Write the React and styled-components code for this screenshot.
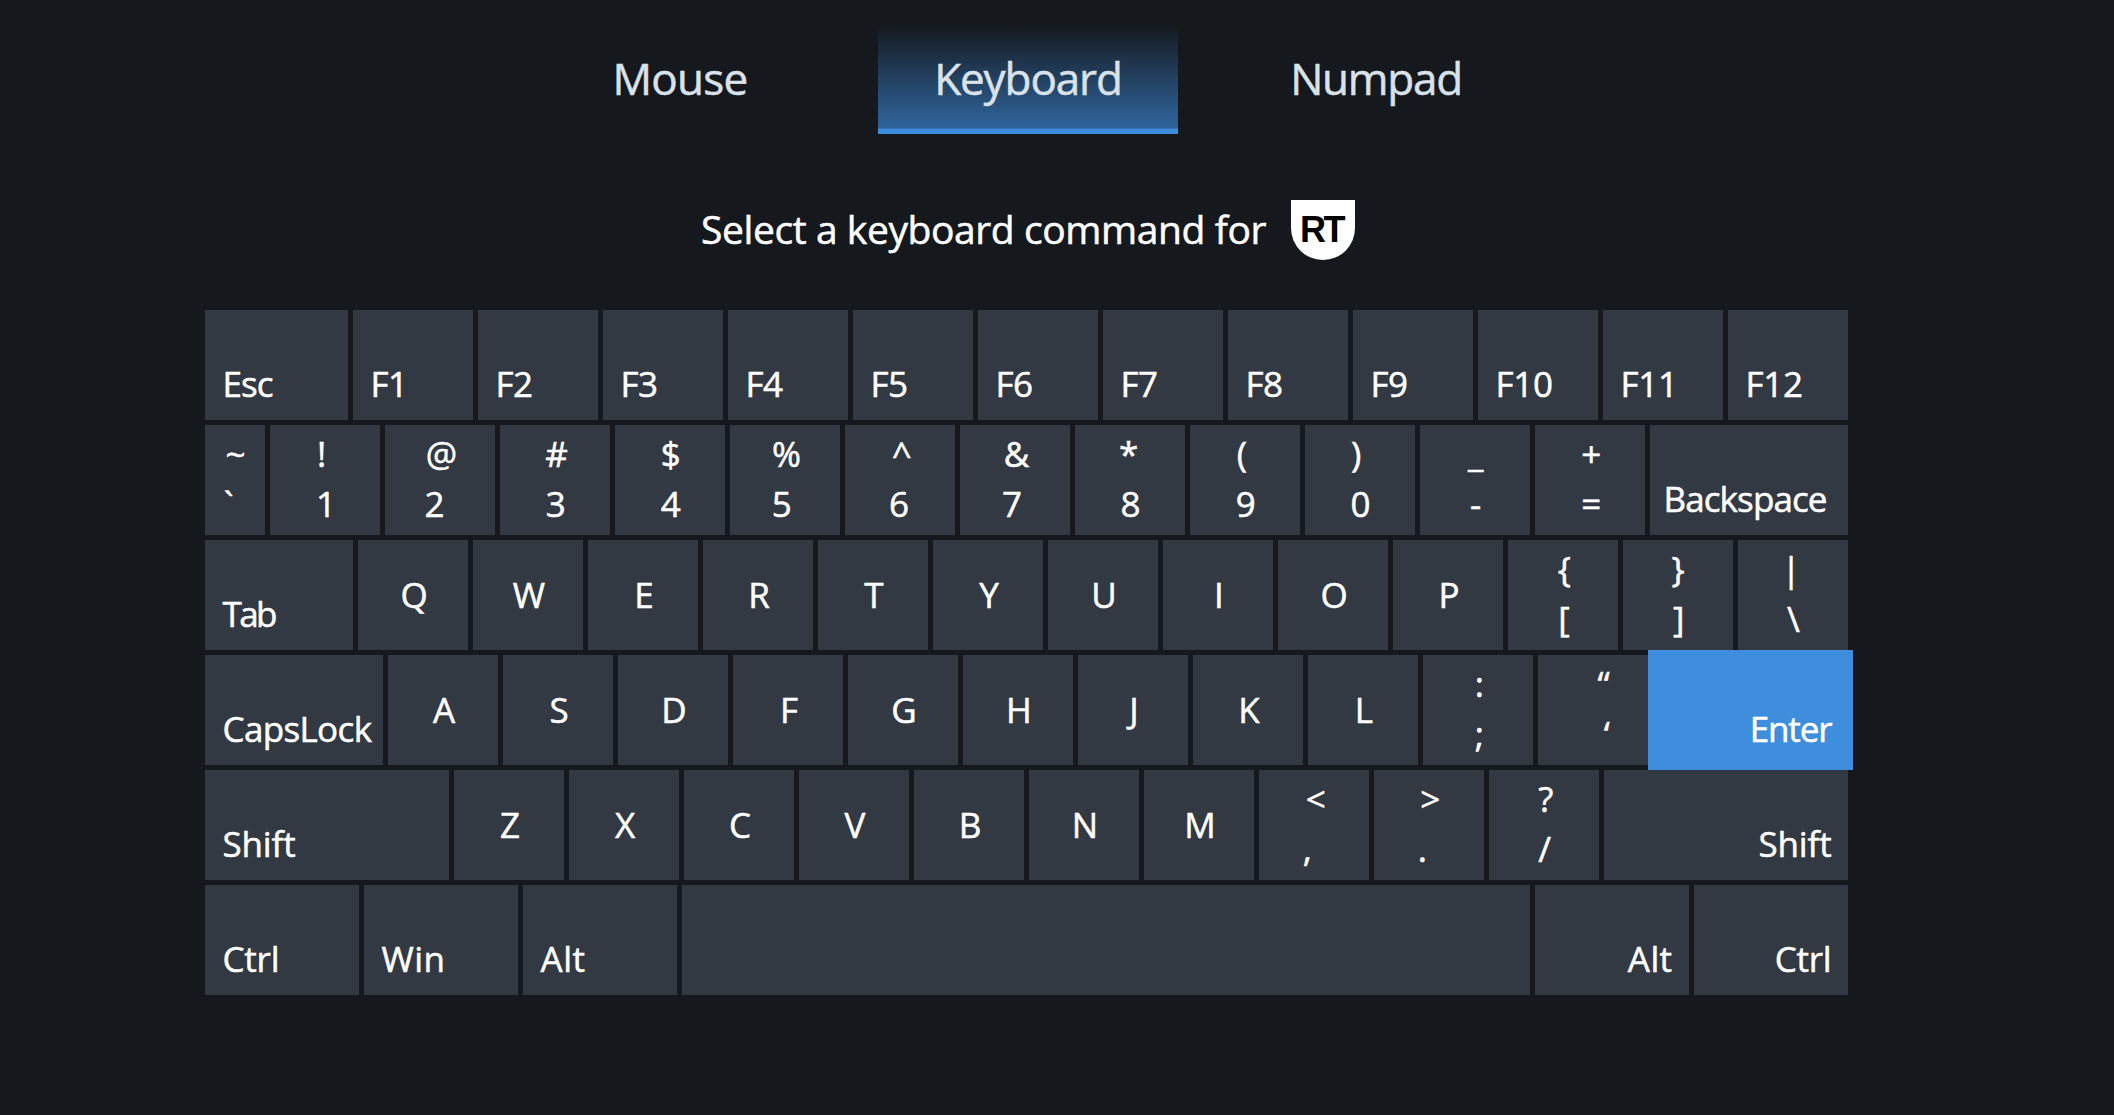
import React from "react";
import styled, { createGlobalStyle } from "styled-components";

const GlobalStyle = createGlobalStyle`
  * {
    box-sizing: border-box;
  }

  body {
    margin: 0;
    background: #15181d;
    color: #ffffff;
    font-family: "Open Sans", "Noto Sans", sans-serif;
    -webkit-text-stroke: 0.5px currentColor;
  }
`;

const Page = styled.main`
  width: 2114px;
  height: 1115px;
  padding: 24px 0 0 205px;
  overflow: hidden;
`;

const Content = styled.div`
  display: flex;
  flex-direction: column;
  width: 1643px;
`;

const Tabs = styled.nav`
  display: flex;
  justify-content: center;
  gap: 48px;
  height: 110px;
  margin-left: 3px;
`;

const Tab = styled.div`
  width: 300px;
  padding-top: 24px;
  border-bottom: 5px solid ${(p) => (p.$active ? "#3f8edd" : "transparent")};
  background: ${(p) =>
    p.$active
      ? "linear-gradient(rgba(50, 110, 172, 0), rgba(50, 110, 172, 0.9)) padding-box"
      : "none"};
  box-shadow: ${(p) => (p.$active ? "inset 0 -1px #3576b8" : "none")};
  color: #dae1e9;
  font-size: 44px;
  line-height: 60px;
  letter-spacing: ${(p) => p.$tracking}px;
  text-align: center;
`;

const Prompt = styled.div`
  display: flex;
  justify-content: center;
  gap: 25px;
  height: 60px;
  margin: 66px 0 50px 3px;
`;

const PromptText = styled.span`
  font-size: 39px;
  line-height: 57px;
  letter-spacing: -0.41px;
  white-space: nowrap;
`;

const TriggerBadge = styled.span`
  display: flex;
  justify-content: center;
  width: 64px;
  height: 60px;
  padding-right: 3px;
  border-radius: 0 0 32px 32px;
  background: #ffffff;
  color: #000000;
  font: bold 36px/60px "Liberation Sans", Arial, sans-serif;
  letter-spacing: -2.5px;
  -webkit-text-stroke: 0;
`;

const Board = styled.section`
  display: flex;
  flex-direction: column;
  gap: 5px;
`;

const KeyRow = styled.div`
  display: flex;
  gap: 5px;
  height: 110px;
`;

const Key = styled.div`
  flex: none;
  display: flex;
  flex-direction: column;
  width: ${(p) => p.$width}px;
  height: 110px;
  background: ${(p) => (p.$selected ? "#3f8edd" : "#333942")};
  box-shadow: ${(p) => (p.$selected ? "0 0 0 5px #3f8edd" : "none")};
  z-index: ${(p) => (p.$selected ? 1 : 0)};
  font-size: 35px;
`;

const Name = styled.span`
  margin-top: auto;
  padding: 0 16.5px 16px ${(p) => p.$inset}px;
  line-height: 41px;
  letter-spacing: ${(p) => p.$tracking}px;
  text-align: ${(p) => p.$align};
  white-space: nowrap;
`;

const Letter = styled.span`
  padding: 34px 0 0 2px;
  line-height: 41px;
  text-align: center;
`;

const Legends = styled.div`
  display: grid;
  grid-template-rows: 50px 50px;
  padding-top: 4px;
`;

const Legend = styled.span`
  width: 100%;
  margin-left: ${(p) => p.$shift}px;
  line-height: 49px;
  text-align: center;
`;

const named = (name, width, tracking = 0, extra = {}) => ({ name, width, tracking, ...extra });
const letters = (text) => text.split("").map((letter) => ({ letter, width: 110 }));
const dual = (upper, upperShift, lower, lowerShift, width = 110) => ({
  upper,
  upperShift,
  lower,
  lowerShift,
  width,
});

const tabs = [
  { label: "Mouse", tracking: -0.7 },
  { label: "Keyboard", tracking: -1.1 },
  { label: "Numpad", tracking: -1.25 },
];
const activeTab = "Keyboard";

const rows = [
  [
    named("Esc", 143, -1),
    ...Array.from({ length: 12 }, (_, i) => named(`F${i + 1}`, 120, i < 9 ? -0.5 : -0.3)),
  ],
  [
    dual("~", 0.6, "`", -6.3, 60),
    dual("!", -3.4, "1", 1),
    dual("@", 1.4, "2", -5.4),
    dual("#", 1.6, "3", 0.7),
    dual("$", 0.7, "4", 0.7),
    dual("%", 1.4, "5", -3.2),
    dual("^", 1.7, "6", -1),
    dual("&", 1.5, "7", -3.1),
    dual("*", -1.4, "8", 0.6),
    dual("(", -3, "9", 0.7),
    dual(")", -3.8, "0", 0.6),
    dual("_", 0.7, "-", 0.7),
    dual("+", 1.3, "=", 1.3),
    named("Backspace", 198, -0.9, { inset: 13.5 }),
  ],
  [
    named("Tab", 148, -2.6),
    ...letters("QWERTYUIOP"),
    dual("{", 1.3, "[", 1),
    dual("}", 0, "]", 0.7),
    dual("|", -2, "\\", 0.3),
  ],
  [
    named("CapsLock", 178, -0.65),
    ...letters("ASDFGHJKL"),
    dual(":", 1.3, ";", 1.3),
    dual("“", 10.7, "‘", 13.7),
    named("Enter", 195, -1.1, { align: "right", selected: true }),
  ],
  [
    named("Shift", 244, -0.15),
    ...letters("ZXCVBNM"),
    dual("<", 1.8, ",", -6.7),
    dual(">", 1.3, ".", -6.7),
    dual("?", 1.7, "/", 0.7),
    named("Shift", 244, -0.15, { align: "right" }),
  ],
  [
    named("Ctrl", 154, -0.2),
    named("Win", 154, 0.4),
    named("Alt", 154, 0.5),
    named("", 848),
    named("Alt", 154, 0.4, { align: "right" }),
    named("Ctrl", 154, -0.2, { align: "right" }),
  ],
];

function KeyFace({ item }) {
  if (item.letter) return <Letter>{item.letter}</Letter>;
  if (item.upper) {
    return (
      <Legends>
        <Legend $shift={item.upperShift}>{item.upper}</Legend>
        <Legend $shift={item.lowerShift}>{item.lower}</Legend>
      </Legends>
    );
  }
  return (
    <Name $align={item.align || "left"} $inset={item.inset || 17.5} $tracking={item.tracking}>
      {item.name}
    </Name>
  );
}

export default function App() {
  return (
    <Page>
      <GlobalStyle />
      <Content>
        <Tabs>
          {tabs.map((tab) => (
            <Tab key={tab.label} $active={tab.label === activeTab} $tracking={tab.tracking}>
              {tab.label}
            </Tab>
          ))}
        </Tabs>
        <Prompt>
          <PromptText>Select a keyboard command for</PromptText>
          <TriggerBadge>RT</TriggerBadge>
        </Prompt>
        <Board>
          {rows.map((row, rowIndex) => (
            <KeyRow key={rowIndex}>
              {row.map((item, keyIndex) => (
                <Key key={keyIndex} $width={item.width} $selected={item.selected}>
                  <KeyFace item={item} />
                </Key>
              ))}
            </KeyRow>
          ))}
        </Board>
      </Content>
    </Page>
  );
}
